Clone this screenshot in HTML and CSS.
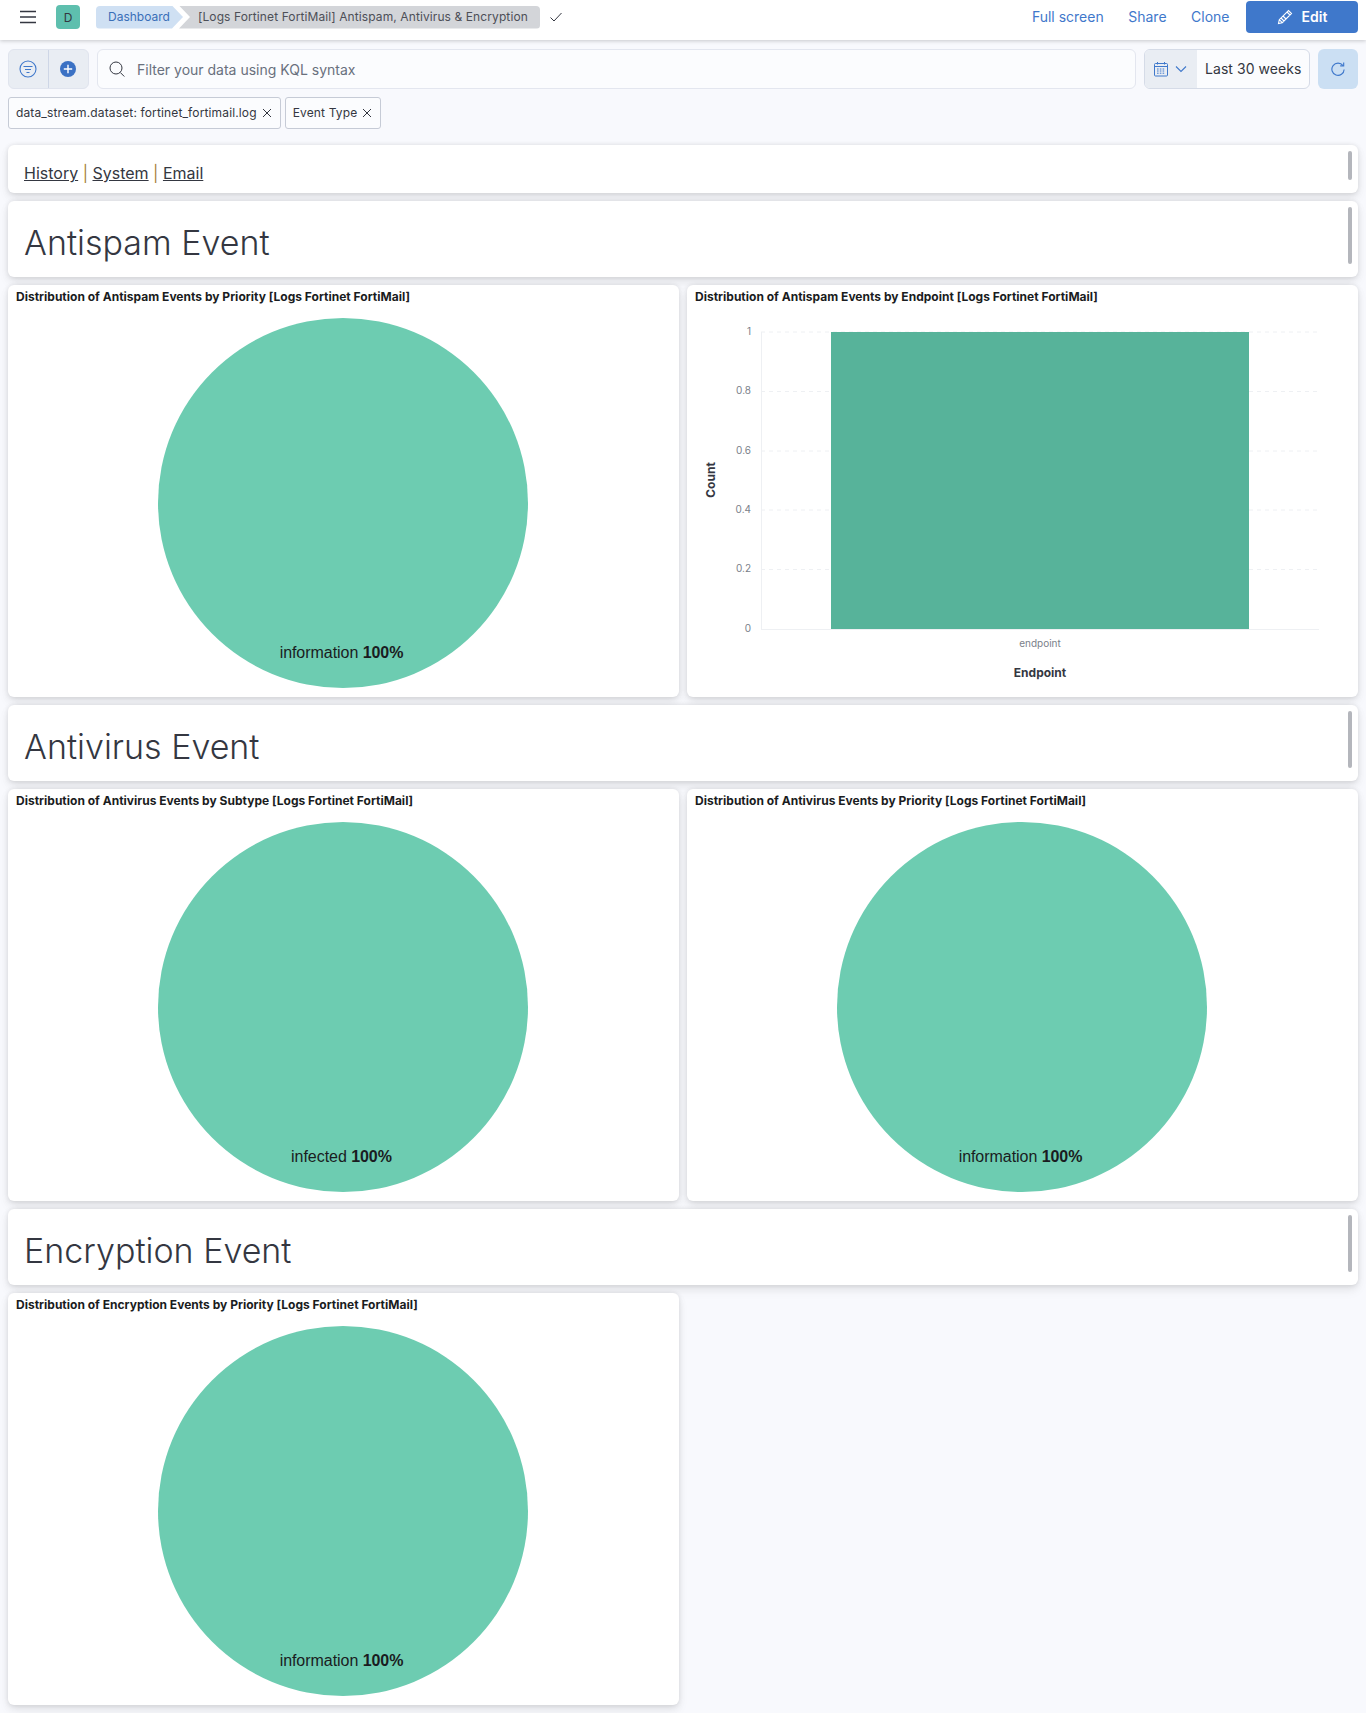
FILE: index.html
```html
<!DOCTYPE html>
<html lang="en">
<head>
<meta charset="UTF-8">
<title>[Logs Fortinet FortiMail] Antispam, Antivirus &amp; Encryption</title>
<link rel="stylesheet" href="styles.css">
</head>
<body>

<header class="topbar">
    <svg class="icon-menu" width="16" height="16" viewBox="0 0 16 16"><path d="M0 2.5h16M0 8h16M0 13.5h16" stroke="#343741" stroke-width="1.6" fill="none"/></svg>
    <div class="avatar">D</div>
    <nav class="breadcrumbs">
        <a class="crumb-first">Dashboard</a>
        <span class="crumb-last">[Logs Fortinet FortiMail] Antispam, Antivirus &amp; Encryption</span>
    </nav>
    <svg class="icon-check" width="16" height="16" viewBox="0 0 16 16"><path d="M2.5 8.5l3.5 3.5 7.5-8" stroke="#343741" stroke-width="1" fill="none"/></svg>
    <div class="top-actions">
        <a>Full screen</a>
        <a>Share</a>
        <a>Clone</a>
        <button class="edit-btn">
            <svg width="16" height="16" viewBox="0 0 16 16" fill="none" stroke="#fff" stroke-width="1.1"><path d="M1.5 14.5l.8-3.800L11.500 1.500l3 3-9.200 9.200zM2.300 10.700l3 3M4 9l3 3M6 7l3 3M10 3l3 3"/></svg>
            <span>Edit</span>
        </button>
    </div>
</header>

<section class="querybar">
    <div class="filter-btns">
        <div class="filter-btn">
            <svg width="18" height="18" viewBox="0 0 18 18" fill="none" stroke="#3f78cb" stroke-width="1.1"><circle cx="9" cy="9" r="8"/><path d="M4.500 6.500h9M6 9.500h6M7.500 12.500h3"/></svg>
        </div>
        <div class="filter-btn">
            <svg width="16" height="16" viewBox="0 0 16 16"><circle cx="8" cy="8" r="8" fill="#3b71c4"/><path d="M8 3.800v8.400M3.800 8h8.400" stroke="#fff" stroke-width="1.4"/></svg>
        </div>
    </div>
    <div class="search">
        <svg width="16" height="16" viewBox="0 0 16 16" fill="none" stroke="#343741" stroke-width="1"><circle cx="7" cy="7" r="6"/><path d="M11.300 11.500l4 4"/></svg>
        <span>Filter your data using KQL syntax</span>
    </div>
    <div class="datepicker">
        <div class="date-quick">
            <svg width="16" height="16" viewBox="0 0 16 16" fill="none" stroke="#3f78cb" stroke-width="1"><rect x="1.500" y="2.500" width="13" height="12.500" rx="1"/><path d="M1.500 5.500h13M4.500 1v2.500M11.500 1v2.500"/><path d="M4 8h8M4 10h8M4 12.200h8" stroke-dasharray="1.6 1.2"/></svg>
            <svg width="12" height="12" viewBox="0 0 12 12" fill="none" stroke="#3f78cb" stroke-width="1.1"><path d="M1 3.500l5 5 5-5"/></svg>
        </div>
        <div class="date-value">Last 30 weeks</div>
    </div>
    <div class="refresh-btn">
        <svg width="14" height="14" viewBox="0 0 16 16" fill="none" stroke="#3f78cb" stroke-width="1.3"><path d="M13.700 4.200A7 7 0 1 0 15 8.500"/><path d="M14.500 0.500v4h-4"/></svg>
    </div>
</section>

<section class="filterbar">
    <div class="chip"><span>data_stream.dataset: fortinet_fortimail.log</span> <svg width="10" height="10" viewBox="0 0 10 10"><path d="M1 1l8 8M9 1l-8 8" stroke="#343741" stroke-width="1"/></svg></div>
    <div class="chip"><span>Event Type</span> <svg width="10" height="10" viewBox="0 0 10 10"><path d="M1 1l8 8M9 1l-8 8" stroke="#343741" stroke-width="1"/></svg></div>
</section>

<main class="dashboard">
    <div class="panel links-panel">
        <a>History</a> <i>|</i> <a>System</a> <i>|</i> <a>Email</a>
        <div class="scrollbar"></div>
    </div>

    <div class="panel heading-panel"><h2>Antispam Event</h2><div class="scrollbar"></div></div>

    <div class="panel chart-panel">
        <h3>Distribution of Antispam Events by Priority [Logs Fortinet FortiMail]</h3>
        <div class="pie"><span>information <b>100%</b></span></div>
    </div>
    <div class="panel chart-panel">
        <h3>Distribution of Antispam Events by Endpoint [Logs Fortinet FortiMail]</h3>
        <svg class="bar-chart" width="671" height="380" viewBox="687 318 671 380">
            <path class="grid" d="M761 332H1319M761 391.500H1319M761 451H1319M761 510H1319M761 569.500H1319"/>
            <path class="axis" d="M761.500 332V629M761 629.500H1319"/>
            <rect x="831" y="332" width="418" height="297" fill="#57b39a"/>
            <text class="tick" x="751" y="335">1</text>
            <text class="tick" x="751" y="394">0.8</text>
            <text class="tick" x="751" y="454">0.6</text>
            <text class="tick" x="751" y="513">0.4</text>
            <text class="tick" x="751" y="572">0.2</text>
            <text class="tick" x="751" y="632">0</text>
            <text class="tick-x" x="1040" y="647">endpoint</text>
            <text class="axis-title" x="1040" y="677">Endpoint</text>
            <text class="axis-title" transform="translate(715 480) rotate(-90)">Count</text>
        </svg>
    </div>

    <div class="panel heading-panel"><h2>Antivirus Event</h2><div class="scrollbar"></div></div>

    <div class="panel chart-panel">
        <h3>Distribution of Antivirus Events by Subtype [Logs Fortinet FortiMail]</h3>
        <div class="pie"><span>infected <b>100%</b></span></div>
    </div>
    <div class="panel chart-panel">
        <h3>Distribution of Antivirus Events by Priority [Logs Fortinet FortiMail]</h3>
        <div class="pie"><span>information <b>100%</b></span></div>
    </div>

    <div class="panel heading-panel"><h2>Encryption Event</h2><div class="scrollbar"></div></div>

    <div class="panel chart-panel">
        <h3>Distribution of Encryption Events by Priority [Logs Fortinet FortiMail]</h3>
        <div class="pie"><span>information <b>100%</b></span></div>
    </div>
</main>

</body>
</html>
```

FILE: styles.css
```css
* {
    box-sizing: border-box;
}
body {
    margin: 0;
    height: 1713px;
    overflow: hidden;
    background-color: #f8f9fd;
    color: #343741;
    font-family: Inter, "Liberation Sans", sans-serif;
    font-size: 14px;
}
a {
    cursor: pointer;
}

/* top bar */
.topbar {
    display: flex;
    align-items: center;
    height: 40px;
    padding: 0 8px 6px 20px;
    background-color: #fff;
    box-shadow: 0 1px 4px rgba(0, 0, 0, .2);
}
.icon-menu {
    flex: none;
}
.avatar {
    display: flex;
    align-items: center;
    justify-content: center;
    width: 24px;
    height: 24px;
    margin-left: 20px;
    border-radius: 4px;
    background-color: #5ebfae;
    font-size: 12px;
}
.breadcrumbs {
    display: flex;
    height: 23px;
    margin-left: 16px;
    font-size: 12px;
    line-height: 22px;
}
.crumb-first {
    width: 87px;
    padding-left: 12px;
    border-radius: 4px 0 0 4px;
    background-color: #cfe0f3;
    color: #3a6fb8;
    clip-path: polygon(0 0, 76px 0, 87px 50%, 76px 100%, 0 100%);
}
.crumb-last {
    width: 361px;
    margin-left: -4px;
    padding-left: 19px;
    border-radius: 0 4px 4px 0;
    background-color: #d3d5d9;
    color: #4d4f57;
    letter-spacing: .1px;
    clip-path: polygon(0 0, 100% 0, 100% 100%, 0 100%, 11px 50%);
}
.icon-check {
    margin-left: 8px;
}
.top-actions {
    display: flex;
    align-items: center;
    margin-left: auto;
    gap: 24.5px;
    color: #3f78cb;
}
.top-actions a {
    padding-bottom: 2px;
}
.edit-btn {
    display: flex;
    align-items: center;
    justify-content: center;
    gap: 9px;
    width: 112px;
    height: 32px;
    margin-left: -8px;
    border: none;
    border-radius: 4px;
    background-color: #3f78cb;
    color: #fff;
    font-family: inherit;
    font-size: 14px;
    font-weight: 600;
}
.edit-btn span {
    padding-bottom: 2px;
}

/* query bar */
.querybar {
    display: flex;
    gap: 8px;
    height: 40px;
    margin: 9px 8px 0;
}
.filter-btns {
    display: flex;
    width: 81px;
    border: 1px solid #e0e4ee;
    border-radius: 6px;
    background-color: #e9edf3;
}
.filter-btn {
    display: flex;
    align-items: center;
    justify-content: center;
    flex: 1;
    padding-right: 1px;
}
.filter-btn + .filter-btn {
    border-left: 1px solid #ced6e6;
}
.search {
    display: flex;
    align-items: center;
    flex: 1;
    gap: 12px;
    padding-left: 11px;
    border: 1px solid #e3e6ef;
    border-radius: 6px;
    background-color: #fbfcfe;
    color: #69707d;
}
.datepicker {
    display: flex;
    width: 166px;
    border: 1px solid #d5dbe7;
    border-radius: 6px;
    overflow: hidden;
    background-color: #fbfcfe;
}
.date-quick {
    display: flex;
    align-items: center;
    gap: 6px;
    width: 52px;
    padding-left: 8px;
    background-color: #e9edf3;
}
.date-value {
    padding-left: 8px;
    line-height: 37px;
    letter-spacing: .05px;
}
.refresh-btn {
    display: flex;
    align-items: center;
    justify-content: center;
    width: 40px;
    border-radius: 6px;
    background-color: #cbdff3;
}

/* filter pills */
.filterbar {
    display: flex;
    gap: 4px;
    margin: 8px 8px 0;
}
.chip {
    display: flex;
    align-items: center;
    gap: 5px;
    height: 32px;
    padding: 0 8px 0 7px;
    border: 1px solid #c6cbd6;
    border-radius: 3px;
    background-color: #fbfcfe;
    font-size: 12px;
    letter-spacing: .14px;
}
.chip span {
    padding-bottom: 2px;
}

/* dashboard grid */
.dashboard {
    display: grid;
    grid-template-columns: 671px 671px;
    grid-auto-rows: min-content;
    gap: 8px;
    margin: 16px 8px 0;
}
.panel {
    position: relative;
    border-radius: 6px;
    background-color: #fff;
    box-shadow: 0 .9px 4px rgba(0, 0, 0, .08), 0 2.6px 8px rgba(0, 0, 0, .06), 0 5.7px 12px rgba(0, 0, 0, .05);
}
.scrollbar {
    position: absolute;
    top: 6px;
    bottom: 13px;
    right: 6px;
    width: 4px;
    border-radius: 2px;
    background-color: #b4b6bc;
}
.links-panel {
    grid-column: 1 / 3;
    height: 48px;
    padding: 16px 16px 0;
    font-size: 16px;
    line-height: 24px;
}
.links-panel a {
    text-decoration: underline;
}
.links-panel i {
    font-style: normal;
    color: #a8823c;
}
.heading-panel {
    grid-column: 1 / 3;
    height: 76px;
    padding: 22px 16px 0;
}
.heading-panel h2 {
    margin: 0;
    font-size: 34px;
    font-weight: 300;
    line-height: 40px;
}
.chart-panel {
    height: 412px;
}
.chart-panel h3 {
    margin: 0;
    padding: 5px 8px 0;
    color: #1a1c21;
    font-size: 12px;
    font-weight: 700;
    line-height: 14px;
    letter-spacing: .01px;
}
.pie {
    display: flex;
    align-items: flex-end;
    justify-content: center;
    width: 370px;
    height: 370px;
    margin: 14px 0 0 150px;
    padding: 0 3px 26px 0;
    border-radius: 50%;
    background-color: #6dccb1;
    color: #1a1c21;
    font-family: "Liberation Sans", Arial, sans-serif;
    font-size: 16px;
    line-height: 18px;
    letter-spacing: -.05px;
}
.bar-chart {
    display: block;
    margin-top: 14px;
}
.grid {
    stroke: #eef0f3;
    stroke-dasharray: 4 4;
    fill: none;
}
.axis {
    stroke: #eef0f3;
    fill: none;
}
.tick {
    fill: #7a7f8a;
    font-size: 10px;
    text-anchor: end;
}
.tick-x {
    fill: #7a7f8a;
    font-size: 10px;
    text-anchor: middle;
}
.axis-title {
    fill: #343741;
    font-size: 12px;
    font-weight: 700;
    text-anchor: middle;
}
```
